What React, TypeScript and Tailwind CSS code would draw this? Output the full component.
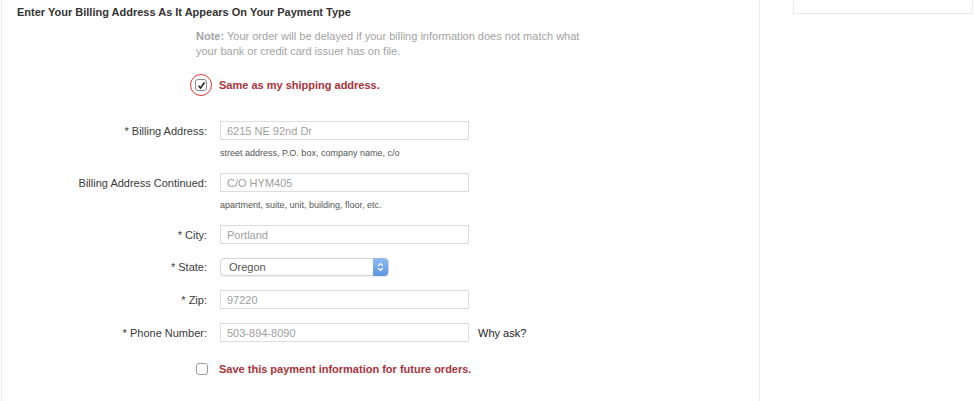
import React from "react";

const font = { fontFamily: '"Liberation Sans", Arial, Helvetica, sans-serif' };

function Field({
  label,
  value,
  mt,
  helper,
  extra,
  select,
}: {
  label: string;
  value: string;
  mt: string;
  helper?: string;
  extra?: string;
  select?: boolean;
}) {
  return (
    <div className={mt}>
      <div className="flex items-center">
        <div className="w-[205px] text-right text-[11px] leading-[14px] text-[#3a3a3a]">{label}</div>
        <div className="ml-[13px]">
          {select ? (
            <div className="flex h-[18px] w-[169px] items-center rounded-[4px] border border-[#d4d4d4] bg-white shadow-[0_1px_1px_rgba(0,0,0,0.08)]">
              <span className="flex-1 pl-[8px] text-[11px] leading-[14px] text-[#555]">{value}</span>
              <span className="flex h-[18px] w-[15px] flex-col items-center justify-center rounded-r-[4px] bg-gradient-to-b from-[#8fbcf3] to-[#5b94e6]">
                <svg width="7" height="10" viewBox="0 0 7 10">
                  <path d="M1 4 L3.5 1.5 L6 4" fill="none" stroke="white" strokeWidth="1.2" />
                  <path d="M1 6 L3.5 8.5 L6 6" fill="none" stroke="white" strokeWidth="1.2" />
                </svg>
              </span>
            </div>
          ) : (
            <div className="flex h-[19px] w-[249px] items-center border border-[#dcdcdc] bg-white pl-[6px] text-[11px] leading-[14px] text-[#a0a0a0]">
              {value}
            </div>
          )}
        </div>
        {extra && <div className="ml-[9px] text-[11px] leading-[14px] text-[#222]">{extra}</div>}
      </div>
      {helper && (
        <div className="ml-[218px] mt-[7px] text-[9px] leading-[12px] text-[#555]">{helper}</div>
      )}
    </div>
  );
}

export default function App() {
  return (
    <div className="flex h-[401px] w-[974px] overflow-hidden bg-white" style={font}>
      <div className="ml-px h-full w-[759px] border-l border-r border-[#ececec]">
        <div className="pl-[15px] pt-[5px] text-[11px] font-bold leading-[14px] text-[#333]">
          Enter Your Billing Address As It Appears On Your Payment Type
        </div>
        <div className="ml-[194px] mt-[10px] w-[400px] text-[11px] leading-[15px] text-[#a3a3a3]">
          <span className="font-bold">Note:</span> Your order will be delayed if your billing information does not match what
          <br />
          your bank or credit card issuer has on file.
        </div>
        <div className="mt-[16px] flex h-[20px] items-center">
          <div className="relative ml-[188px] flex h-[22px] w-[22px] items-center justify-center rounded-full border-[1.5px] border-[#d9363a]">
            <div className="flex h-[12px] w-[12px] items-center justify-center rounded-[3px] border border-[#8a8a8a] bg-white">
              <svg width="9" height="9" viewBox="0 0 9 9">
                <path d="M1.5 4.8 L3.5 7 L7.5 1.5" fill="none" stroke="#222" strokeWidth="1.5" />
              </svg>
            </div>
          </div>
          <span className="ml-[7px] text-[11px] font-bold leading-[14px] text-[#a8333a]">
            Same as my shipping address.
          </span>
        </div>
        <Field
          mt="mt-[26px]"
          label="* Billing Address:"
          value="6215 NE 92nd Dr"
          helper="street address, P.O. box, company name, c/o"
        />
        <Field
          mt="mt-[14px]"
          label="Billing Address Continued:"
          value="C/O HYM405"
          helper="apartment, suite, unit, building, floor, etc."
        />
        <Field mt="mt-[14px]" label="* City:" value="Portland" />
        <Field mt="mt-[14px]" label="* State:" value="Oregon" select />
        <Field mt="mt-[14px]" label="* Zip:" value="97220" />
        <Field mt="mt-[14px]" label="* Phone Number:" value="503-894-8090" extra="Why ask?" />
        <div className="mt-[20px] flex h-[14px] items-center">
          <div className="ml-[194px] h-[12px] w-[12px] rounded-[3px] border border-[#9a9a9a] bg-white" />
          <span className="ml-[11px] text-[11px] font-bold leading-[14px] text-[#a8333a]">
            Save this payment information for future orders.
          </span>
        </div>
      </div>
      <div className="ml-[33px] h-[14px] w-[180px] border-b border-l border-r border-[#e8e8e8]" />
    </div>
  );
}
